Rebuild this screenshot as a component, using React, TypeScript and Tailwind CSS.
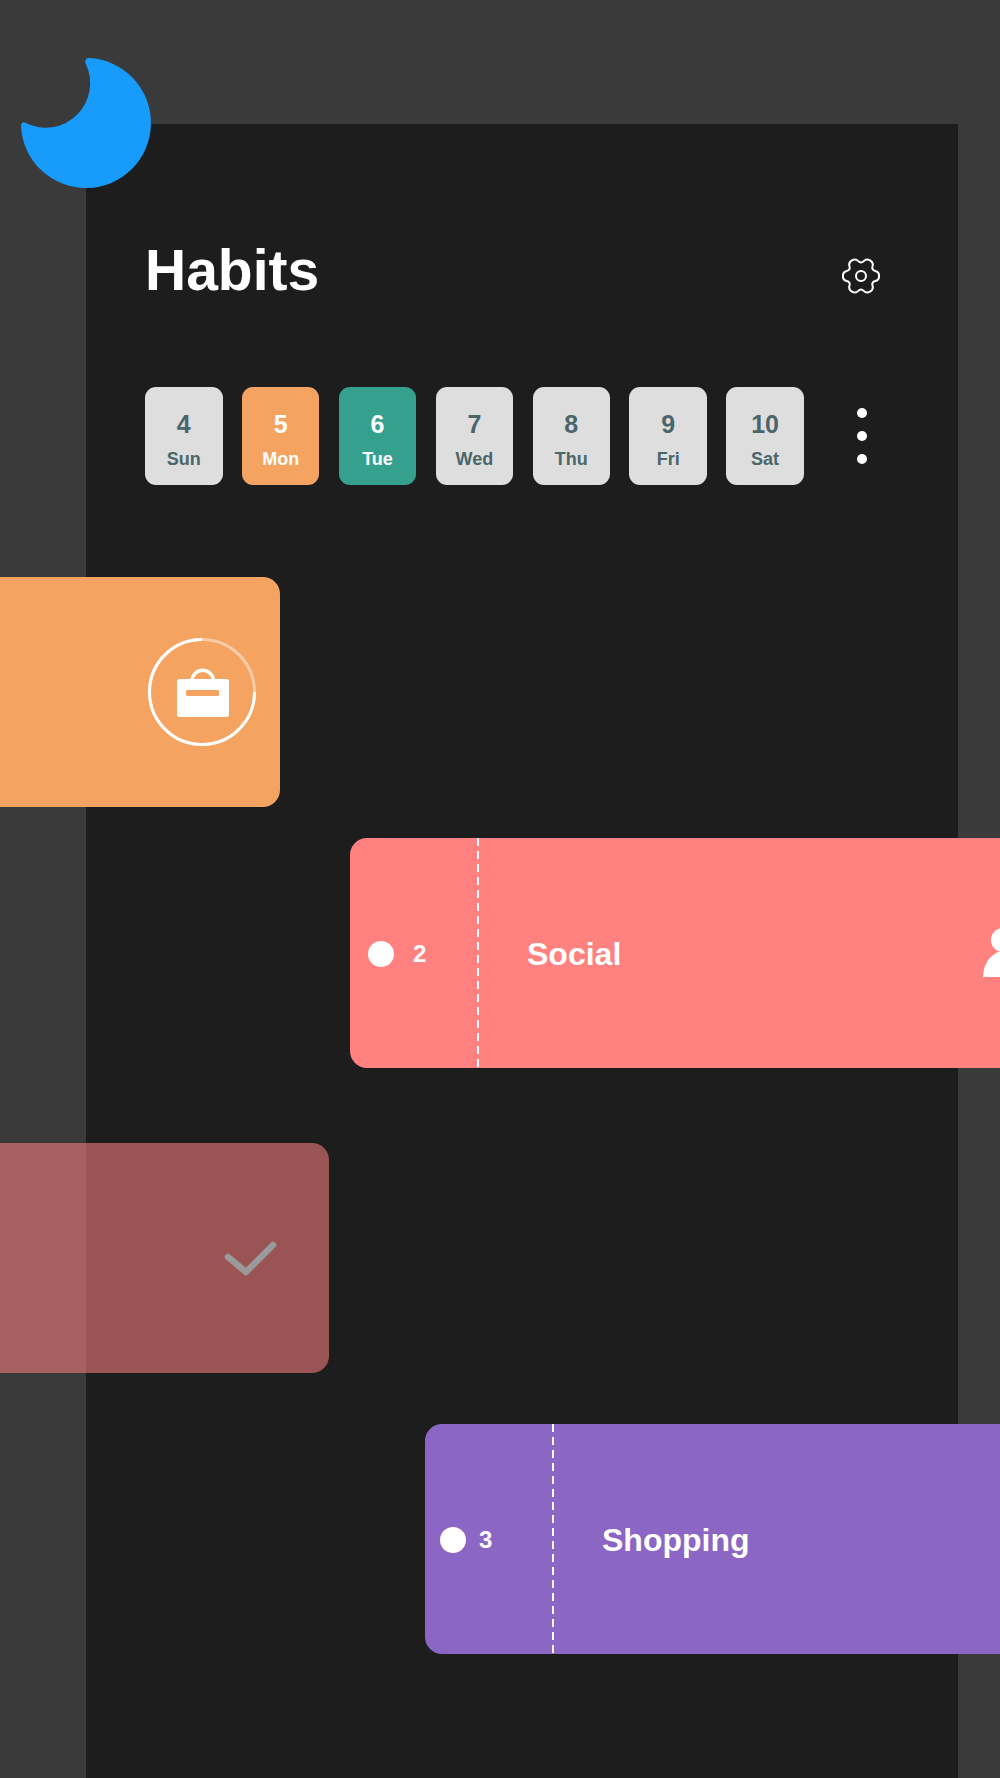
import React from 'react';

const days = [
  { num: '4', label: 'Sun', tone: 'bg-[#dedede] text-[#4b666b]' },
  { num: '5', label: 'Mon', tone: 'bg-[#f5a361] text-white' },
  { num: '6', label: 'Tue', tone: 'bg-[#36a08f] text-white' },
  { num: '7', label: 'Wed', tone: 'bg-[#dedede] text-[#4b666b]' },
  { num: '8', label: 'Thu', tone: 'bg-[#dedede] text-[#4b666b]' },
  { num: '9', label: 'Fri', tone: 'bg-[#dedede] text-[#4b666b]' },
  { num: '10', label: 'Sat', tone: 'bg-[#dedede] text-[#4b666b]' },
];

const Moon = () => (
  <svg className="absolute left-[20px] top-[57px]" width="133" height="133" viewBox="20 57 133 133">
    <path
      fill="#179cfc"
      d="M89 58.1A65 65 0 1 1 21 126C21 123.5 22.8 121.5 24.8 122.5A44.5 44.5 0 0 0 85.5 63.3C84.5 60 87 58 89 58.1Z"
    />
  </svg>
);

// six rounded lobes, points left and right, dip at the top
const gearPath = () => {
  const pts: [number, number][] = [];
  for (let i = 0; i < 6; i++) {
    const a = i * 60;
    [[-30, 12], [-13, 18.6], [13, 18.6]].forEach(([d, r]) => {
      const t = ((a + d) * Math.PI) / 180;
      pts.push([19 + r * Math.cos(t), 19 + r * Math.sin(t)]);
    });
  }
  const mid = (p: [number, number], q: [number, number]) => `${((p[0] + q[0]) / 2).toFixed(2)} ${((p[1] + q[1]) / 2).toFixed(2)}`;
  let d = `M${mid(pts[pts.length - 1], pts[0])}`;
  pts.forEach((p, i) => {
    d += `Q${p[0].toFixed(2)} ${p[1].toFixed(2)} ${mid(p, pts[(i + 1) % pts.length])}`;
  });
  return d + 'Z';
};

const Gear = () => (
  <svg className="mt-[12px]" width="38" height="38" viewBox="0 0 38 38" fill="none" stroke="#fff" strokeWidth="2" strokeLinejoin="round">
    <path d={gearPath()} />
    <circle cx="19" cy="19" r="5" />
  </svg>
);

const BagRing = () => (
  <svg width="108" height="108" viewBox="0 0 108 108" fill="none">
    <circle cx="54" cy="54" r="52.5" stroke="#fff" strokeOpacity="0.45" strokeWidth="3" />
    <path d="M54 1.500A52.500 52.500 0 1 0 106.500 54" stroke="#fff" strokeWidth="3" />
    <path d="M44 43A10.750 10.750 0 0 1 65.500 43" stroke="#fff" strokeWidth="3.500" />
    <rect x="29" y="41" width="52" height="38" rx="2.500" fill="#fff" />
    <rect x="38" y="52" width="33" height="6" rx="1.500" fill="#f5a361" />
  </svg>
);

const Check = () => (
  <svg width="54" height="35" viewBox="0 0 54 35" fill="none" stroke="#9a9a9a" strokeWidth="6.500" strokeLinecap="round" strokeLinejoin="round">
    <path d="M4 16L22 31L49 4" />
  </svg>
);

const Person = () => (
  <svg className="shrink-0" width="44" height="50" viewBox="0 0 44 50" fill="#fff">
    <circle cx="20" cy="12" r="12" />
    <path d="M0 49A21.500 26 0 0 1 43 49Z" />
  </svg>
);

const Dashes = () => (
  <div className="h-full w-[2px] bg-[repeating-linear-gradient(to_bottom,#ffffff_0,#ffffff_8px,transparent_8px,transparent_13px)]" />
);

export default function App() {
  return (
    <div className="relative h-[1778px] w-[1000px] overflow-hidden bg-[#3a3a3a] pt-[124px] font-['Liberation_Sans',sans-serif]">
      <div className="ml-[86px] h-[1654px] w-[872px] bg-[#1d1d1d] pt-[116px]">
        <div className="flex h-[60px] items-center justify-between pl-[59px] pr-[78px]">
          <h1 className="text-[57px] font-bold leading-[60px] text-white">Habits</h1>
          <Gear />
        </div>

        <div className="mt-[87px] flex items-center gap-[19.4px] pl-[59px]">
          {days.map((d) => (
            <div key={d.num} className={`flex h-[98px] w-[77.5px] flex-col items-center rounded-[11px] pt-[22px] font-bold ${d.tone}`}>
              <span className="text-[25px] leading-[30px]">{d.num}</span>
              <span className="mt-[9px] text-[18px] leading-[22px]">{d.label}</span>
            </div>
          ))}
          <div className="ml-[34px] flex flex-col gap-[13px]">
            <div className="h-[10px] w-[10px] rounded-full bg-white" />
            <div className="h-[10px] w-[10px] rounded-full bg-white" />
            <div className="h-[10px] w-[10px] rounded-full bg-white" />
          </div>
        </div>

        <div className="mt-[92px] -ml-[86px] flex h-[230px] w-[280px] items-center justify-end rounded-r-[17px] bg-[#f5a361] pr-[24px]">
          <BagRing />
        </div>

        <div className="mt-[31px] ml-[264px] flex h-[230px] w-[800px] items-center rounded-l-[17px] bg-[#ff8280] text-white">
          <div className="flex h-full w-[127px] shrink-0 items-center pl-[18px] pt-[2px]">
            <div className="h-[26px] w-[26px] rounded-full bg-white" />
            <span className="ml-[19px] text-[24px] font-bold">2</span>
          </div>
          <Dashes />
          <span className="ml-[48px] pt-[2px] text-[32px] font-bold">Social</span>
          <div className="ml-[361.5px]">
            <Person />
          </div>
        </div>

        <div className="mt-[75px] -ml-[86px] flex h-[230px] w-[329px] items-center justify-end rounded-r-[17px] bg-[#ff8280]/55 pr-[51px]">
          <Check />
        </div>

        <div className="mt-[51px] ml-[339px] flex h-[230px] w-[800px] items-center rounded-l-[17px] bg-[#8b66c4] text-white">
          <div className="flex h-full w-[127px] shrink-0 items-center pl-[15px] pt-[2px]">
            <div className="h-[26px] w-[26px] rounded-full bg-white" />
            <span className="ml-[13px] text-[24px] font-bold">3</span>
          </div>
          <Dashes />
          <span className="ml-[48px] pt-[2px] text-[32px] font-bold">Shopping</span>
        </div>
      </div>
      <Moon />
    </div>
  );
}
